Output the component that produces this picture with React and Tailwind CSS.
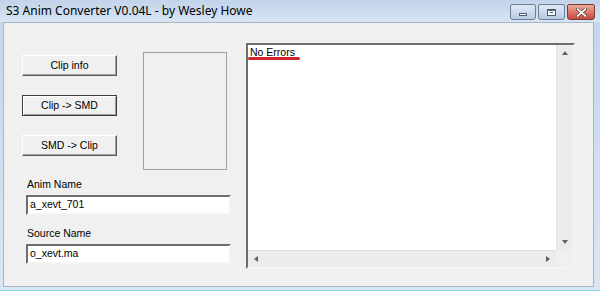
import React from "react";

const ui = { fontFamily: "'Liberation Sans', Arial, sans-serif" };

const RaisedButton = ({ label, isDefault }) => (
  <div
    className={`w-[95px] h-[21px] flex items-center justify-center text-[10.5px] text-black bg-[#f0f0f0] ${
      isDefault
        ? "border border-[#3c3c3c] shadow-[inset_1px_1px_0_#ffffff,inset_-1px_-1px_0_#a0a0a0]"
        : "border border-t-white border-l-white border-b-[#5a5a5a] border-r-[#5a5a5a] shadow-[inset_-1px_-1px_0_#a0a0a0]"
    }`}
  >
    {label}
  </div>
);

const Field = ({ label, value, className = "" }) => (
  <div className={`flex flex-col ${className}`}>
    <div className="text-[10.5px] leading-[13px] text-black pl-[1px]">{label}</div>
    <div className="mt-[4px] w-[205px] h-[20px] bg-white border-2 border-t-[#6e6e6e] border-l-[#6e6e6e] border-b-[#f4f4f4] border-r-[#f4f4f4] flex items-center pl-[2px] text-[10.5px] text-black">
      {value}
    </div>
  </div>
);

const TitleButtons = () => (
  <div className="flex items-start gap-[2px] pt-[4px] pr-[5px]">
    <div className="w-[26px] h-[16px] rounded-b-[3px] rounded-t-[2px] border border-[#6d7f96] bg-gradient-to-b from-[#dfe9f5] to-[#b8cbe2] flex items-end justify-center pb-[3px]">
      <div className="w-[8px] h-[3px] bg-white border border-[#4d5d72]" />
    </div>
    <div className="w-[27px] h-[16px] rounded-b-[3px] rounded-t-[2px] border border-[#6d7f96] bg-gradient-to-b from-[#dfe9f5] to-[#b8cbe2] flex items-center justify-center">
      <div className="w-[9px] h-[7px] bg-white border border-[#4d5d72] border-t-2 flex items-center justify-center">
        <div className="w-[3px] h-[1px] bg-[#4d5d72]" />
      </div>
    </div>
    <div className="w-[28px] h-[16px] rounded-b-[3px] rounded-t-[2px] border border-[#7a3b35] bg-gradient-to-b from-[#e9a99a] to-[#c9463a] flex items-center justify-center">
      <svg width="11" height="9" viewBox="0 0 11 9">
        <path d="M1.5 1 L9.5 8 M9.5 1 L1.5 8" stroke="#4a2420" strokeWidth="3" strokeLinecap="round" />
        <path d="M1.5 1 L9.5 8 M9.5 1 L1.5 8" stroke="#ffffff" strokeWidth="1.8" strokeLinecap="round" />
      </svg>
    </div>
  </div>
);

const ScrollArrow = ({ dir }) => {
  const d = {
    up: "M1 5 L4 1 L7 5 Z",
    down: "M1 1 L4 5 L7 1 Z",
    left: "M5 1 L1 4 L5 7 Z",
    right: "M1 1 L5 4 L1 7 Z",
  }[dir];
  const vertical = dir === "up" || dir === "down";
  return (
    <svg width={vertical ? 8 : 6} height={vertical ? 6 : 8} viewBox={vertical ? "0 0 8 6" : "0 0 6 8"}>
      <path d={d} fill="#606060" />
    </svg>
  );
};

export default function App() {
  return (
    <div className="w-[600px] h-[293px] bg-white" style={ui}>
      <div className="w-[600px] h-[291px] flex flex-col bg-gradient-to-b from-[#c3d5ec] to-[#d9e6f4] border-b border-[#7ee0e6]">
        {/* Title bar */}
        <div className="h-[22px] flex items-start justify-between bg-gradient-to-b from-[#c2d4eb] to-[#d7e4f3]">
          <div
            className="pl-[6px] pt-[3px] text-[12px] leading-[16px] text-black"
            style={{ fontFamily: "'Noto Sans', 'Open Sans', sans-serif" }}
          >
            S3 Anim Converter V0.04L - by Wesley Howe
          </div>
          <TitleButtons />
        </div>

        {/* Client area */}
        <div className="flex-1 ml-[3px] mr-[6px] mb-[3px] bg-[#f0f0f0] border border-[#aab6c4] flex pt-[20px]">
          {/* Left controls */}
          <div className="w-[242px] flex flex-col">
            <div className="flex">
              <div className="ml-[18px] mt-[12px] flex flex-col gap-[19px]">
                <RaisedButton label="Clip info" />
                <RaisedButton label="Clip -> SMD" isDefault />
                <RaisedButton label="SMD -> Clip" />
              </div>
              <div className="ml-[26px] mt-[9px] w-[84px] h-[118px] border border-[#a0a0a0] bg-[#f0f0f0]" />
            </div>
            <div className="ml-[22px]">
              <Field label="Anim Name" value="a_xevt_701" className="mt-[8px]" />
              <Field label="Source Name" value="o_xevt.ma" className="mt-[12px]" />
            </div>
          </div>

          {/* Log box */}
          <div className="w-[329px] h-[226px] border-2 border-t-[#6e6e6e] border-l-[#6e6e6e] border-b-[#f4f4f4] border-r-[#f4f4f4] bg-white flex flex-col">
            <div className="flex-1 flex">
              <div className="flex-1 pl-[2px] pt-[1px] text-[10.5px] leading-[12px] text-black">
                <div className="relative w-fit">
                  No Errors
                  <div className="absolute left-[-2px] right-[-5px] top-[11px] h-[3px] rounded-full bg-[#d3232f]" />
                </div>
              </div>
              <div className="w-[17px] bg-[#ececec] border-l border-[#e0e0e0] flex flex-col items-center justify-between py-[5px]">
                <ScrollArrow dir="up" />
                <ScrollArrow dir="down" />
              </div>
            </div>
            <div className="h-[17px] flex">
              <div className="flex-1 bg-[#ececec] border-t border-[#e0e0e0] flex items-center justify-between px-[5px]">
                <ScrollArrow dir="left" />
                <ScrollArrow dir="right" />
              </div>
              <div className="w-[17px] bg-[#f0f0f0]" />
            </div>
          </div>
        </div>
      </div>
    </div>
  );
}
